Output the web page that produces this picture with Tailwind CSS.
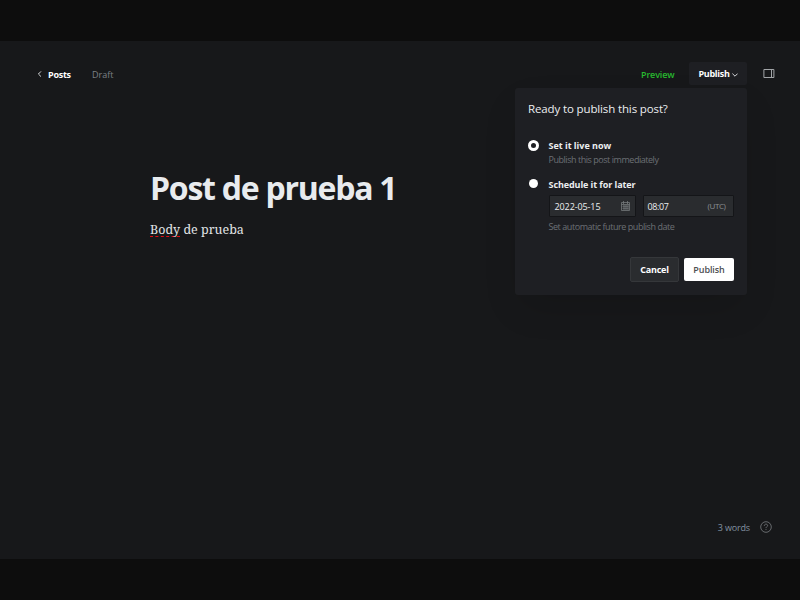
<!DOCTYPE html>
<html lang="es">
<head>
<meta charset="utf-8">
<title>Post editor</title>
<script src="https://cdn.jsdelivr.net/npm/@tailwindcss/browser@4"></script>
</head>
<body class="h-[600px] w-[800px] overflow-hidden bg-[#0d0d0d] py-[41px] font-['Open_Sans','Noto_Sans',sans-serif] text-[9px] text-[#eceef0]">
<main class="relative flex h-[518px] flex-col bg-[#17181a]">
  <header class="flex h-[65px] items-center pl-[37px] pr-[25px]">
    <a class="flex w-[55px] items-center gap-[6px] font-bold text-white">
      <svg class="h-[6px] w-[5px]" viewBox="0 0 5 6" fill="none" stroke="#d5d7d9" stroke-width="1"><path d="M4 .4 1.4 3 4 5.6"/></svg>
      <span class="pt-[2px] tracking-[-0.25px]">Posts</span>
    </a>
    <span class="pt-[2px] text-[#7c8085]">Draft</span>
    <a class="ml-auto w-[48px] pt-[2px] font-semibold tracking-[-0.15px] text-[#28b92f]">Preview</a>
    <button class="flex h-[23px] w-[58px] items-center justify-center gap-[2px] rounded-[2px] bg-[#1e1f23] font-bold text-white">
      <span class="pt-px tracking-[-0.3px]">Publish</span>
      <svg class="mt-[3px] h-[4px] w-[6px]" viewBox="0 0 6 4" fill="none" stroke="#d5d7d9"><path d="M.4 .6 3 3.2 5.6 .6"/></svg>
    </button>
    <svg class="ml-[16px] h-[11px] w-[12px]" viewBox="0 0 12 11" fill="none" stroke="#a2a5a8"><path d="M.9 1.5H10.9V9.5H.9ZM8.5 1.5V9.5"/></svg>
  </header>

  <article class="pl-[150px] pt-[61px]">
    <h1 class="h-[42px] whitespace-nowrap text-[32px] leading-[42px] font-bold tracking-[-1.25px] text-[#e8ebee]">Post de prueba 1</h1>
    <p class="mt-[12px] font-['Noto_Serif','DejaVu_Serif',serif] text-[12.5px] leading-[18px] text-[#e1e4e6]"><span class="inline-block h-[16px] border-b border-dashed border-[#e00b13]">Body</span> de prueba</p>
  </article>

  <section class="absolute left-[515px] top-[47px] flex h-[207px] w-[232px] flex-col rounded-[3px] bg-[#1e1f23] pl-[13px] pr-[13px] pt-[13px] shadow-[0_16px_36px_-6px_rgba(0,0,0,0.14)]">
    <h2 class="h-[16px] whitespace-nowrap text-[11.5px] leading-[16px] tracking-[-0.13px]">Ready to publish this post?</h2>
    <div class="mt-[22px] flex gap-[9.5px]">
      <span class="mt-[1px] h-[11px] w-[11px] shrink-0 rounded-full border-[3px] border-white bg-[#1e1f23]"></span>
      <div>
        <div class="h-[14px] leading-[14px] font-bold tracking-[-0.02px]">Set it live now</div>
        <div class="h-[14px] leading-[14px] tracking-[-0.46px] text-[#6c7075]">Publish this post immediately</div>
      </div>
    </div>
    <div class="mt-[11px] flex">
      <span class="ml-[1px] mr-[11px] mt-[1px] h-[9px] w-[9px] shrink-0 rounded-full bg-white"></span>
      <div class="ml-[-0.5px]">
        <div class="h-[14px] leading-[14px] font-bold tracking-[-0.08px]">Schedule it for later</div>
        <div class="mt-[3px] flex h-[22px] gap-[7px]">
          <div class="flex w-[87px] items-center justify-between rounded-[1px] border border-[#141518] bg-[#2a2c2f] pl-[5px] pr-[5px]">
            <span class="pt-[2px] tracking-[-0.1px]">2022-05-15</span>
            <svg class="mb-px h-[10px] w-[9px]" viewBox="0 0 9 10" fill="none" stroke="#75787b" stroke-width=".8"><path d="M.5 1.5H8.5M.5 3.5H8.5M.5 1.5V9.5H8.5V1.5M2.5 0V3M6.5 0V3M1.5 5.3H7.5M1.5 7.3H7.5M3 4V9M5 4V9M7 4V9"/></svg>
          </div>
          <div class="flex w-[91px] items-center justify-between rounded-[1px] border border-[#141518] bg-[#2a2c2f] pl-[4px] pr-[7px]">
            <span class="pt-[2px] tracking-[-0.4px]">08:07</span><span class="text-[8px] tracking-[-0.4px] text-[#8d9093]">(UTC)</span>
          </div>
        </div>
        <div class="mt-[3px] h-[14px] leading-[14px] tracking-[-0.44px] text-[#6c7075]">Set automatic future publish date</div>
      </div>
    </div>
    <div class="mt-[23px] flex items-center justify-end gap-[5px]">
      <button class="h-[25px] w-[49px] rounded-[2px] border border-[#35373a] bg-[#2a2c2f] font-bold tracking-[-0.25px] text-white">Cancel</button>
      <button class="h-[23px] w-[50px] rounded-[2px] bg-white font-semibold tracking-[-0.1px] text-[#4c4e51]">Publish</button>
    </div>
  </section>

  <footer class="mt-auto mb-[25px] mr-[28px] flex h-[13px] items-center justify-end gap-[10px] text-[#8391a1]">
    <span class="tracking-[-0.15px]">3 words</span>
    <svg class="mb-px h-[12px] w-[12px]" viewBox="0 0 12 12" fill="none" stroke="#7b7f83" stroke-width=".8"><circle cx="6" cy="6" r="5.3"/><path d="M4.3 4.8C4.3 2.5 7.8 2.7 7.6 4.7 7.5 5.7 6 5.8 6 7.1M6 8.1V9"/></svg>
  </footer>
</main>
</body>
</html>
